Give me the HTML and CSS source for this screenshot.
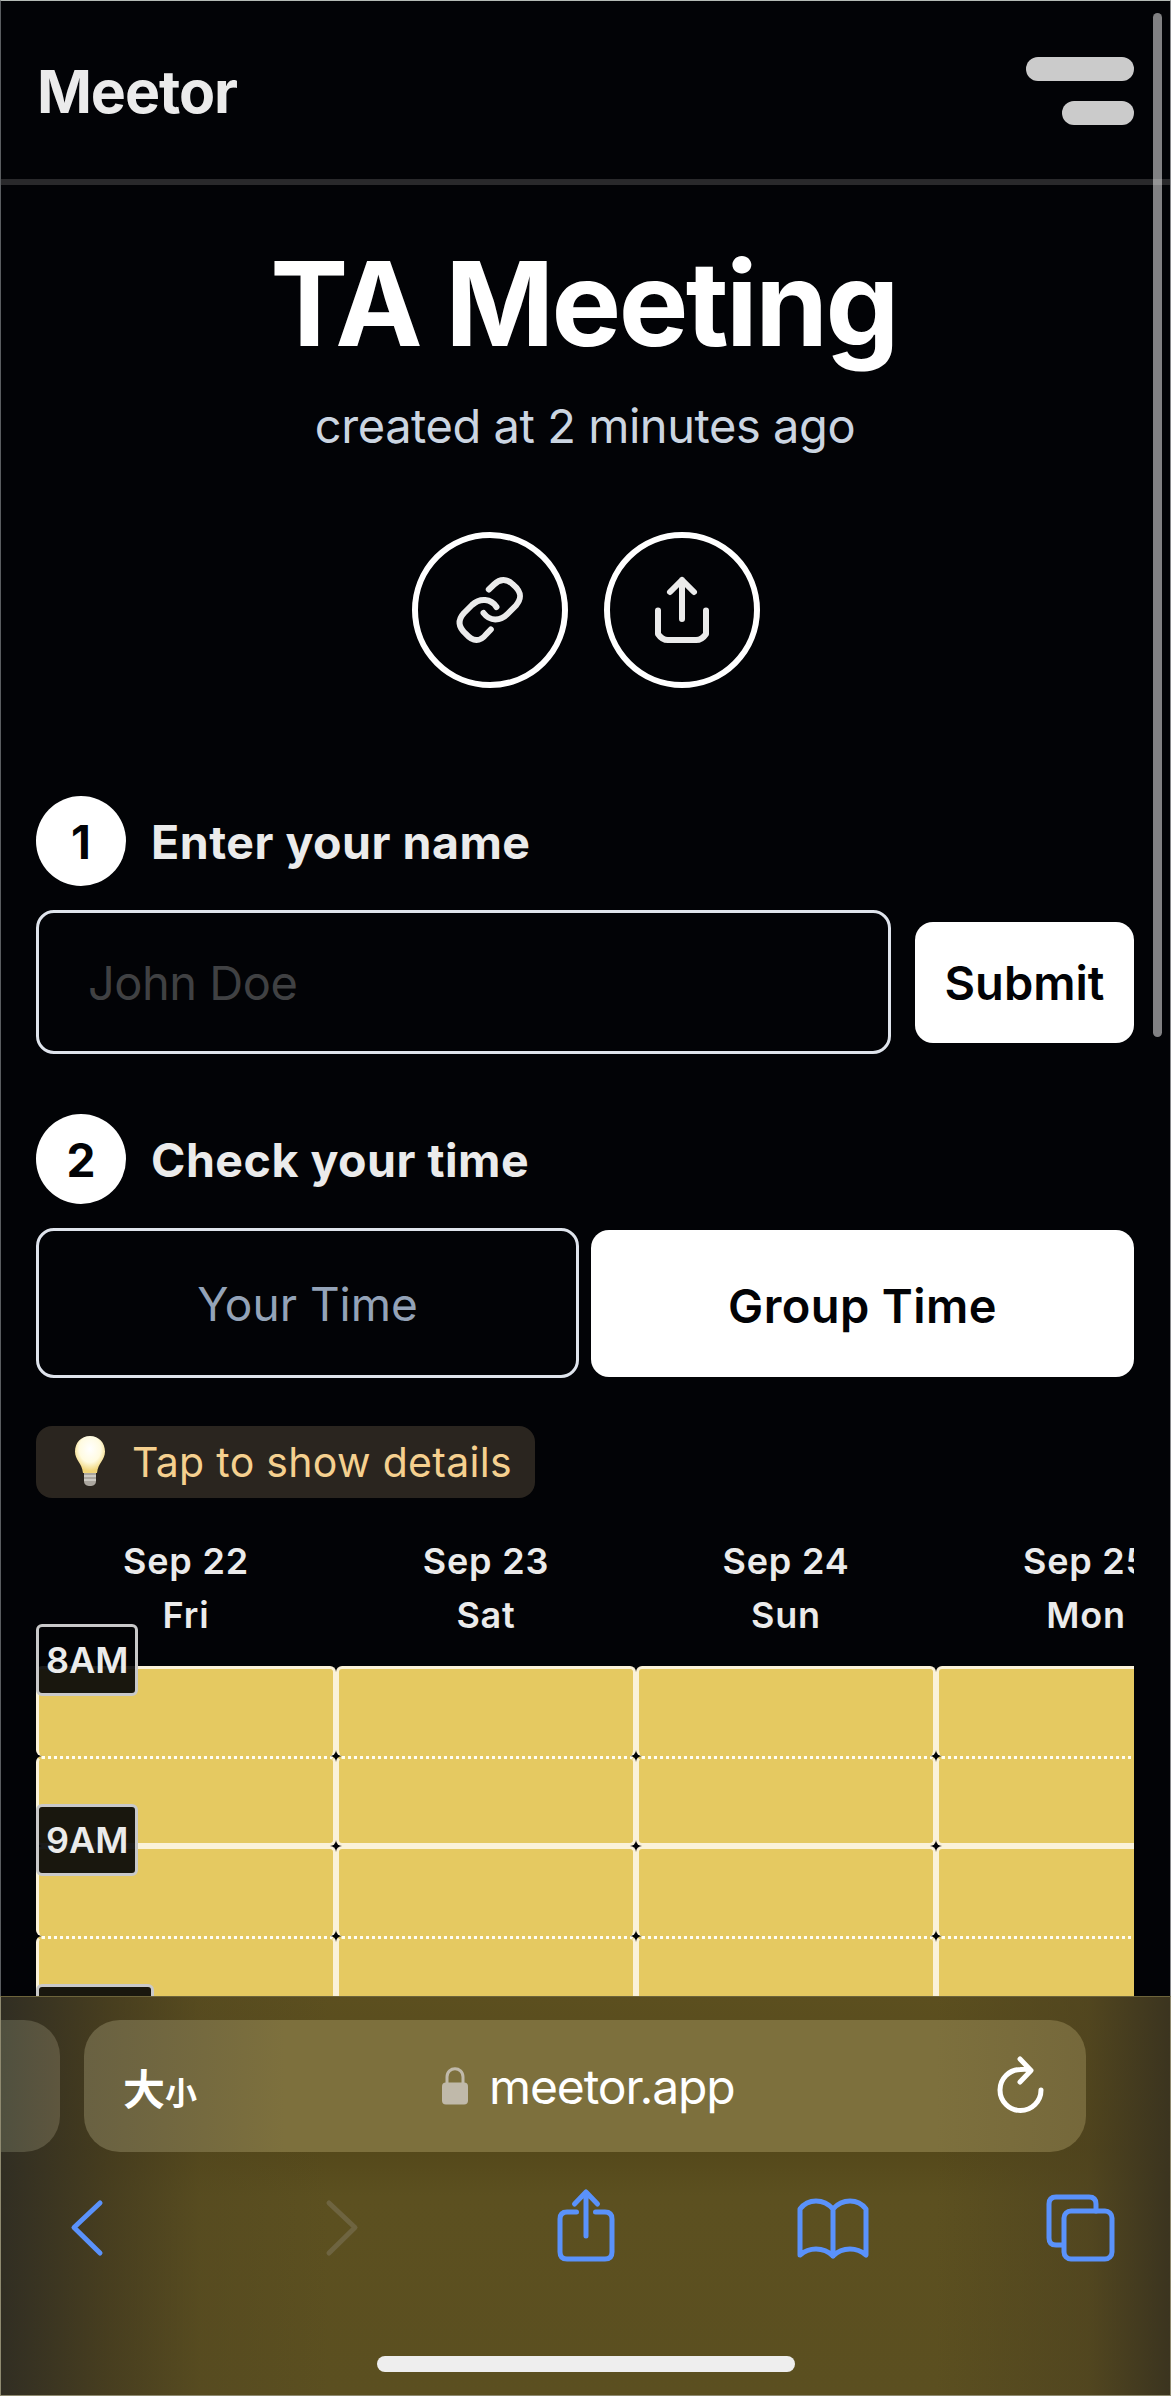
FILE: index.html
```html
<!DOCTYPE html>
<html lang="en">
<head>
	<meta charset="UTF-8">
	<title>Meetor</title>
	<link rel="stylesheet" href="styles.css">
</head>
<body>
	<div class="page">
		<header class="header">
			<div class="logo">Meetor</div>
			<div class="menu">
				<span class="menu-long"></span>
				<span class="menu-short"></span>
			</div>
		</header>
		<h1 class="title">TA Meeting</h1>
		<p class="created">created at 2 minutes ago</p>
		<div class="actions">
			<button class="round">
				<svg width="72" height="72" viewBox="0 0 72 72">
					<path d="M34.800 15.500L40 10.500C46 4.500 53 4.500 59 10.500C68 18 68 24 62 31.500L54 39.500C46 47.500 36 47.500 29.500 39"/>
					<path d="M42.500 33C37 24.500 26 23.500 18 31L10 39C3.500 46 4 53 12 60C19 68 26 68 32 60.500L36.800 55.500"/>
				</svg>
			</button>
			<button class="round">
				<svg width="72" height="72" viewBox="0 0 72 72">
					<path d="M36 45V6M24 18L36 6L48 18M12 36.500V60Q16 66 22 66H50Q56 66 60 60V36.500"/>
				</svg>
			</button>
		</div>

		<div class="step">
			<span class="num">1</span>
			<span class="step-text">Enter your name</span>
		</div>
		<div class="name-row">
			<div class="name-input">John Doe</div>
			<button class="submit">Submit</button>
		</div>

		<div class="step second">
			<span class="num">2</span>
			<span class="step-text">Check your time</span>
		</div>
		<div class="tabs">
			<button class="tab">Your Time</button>
			<button class="tab active">Group Time</button>
		</div>

		<div class="hint">
			<svg width="34" height="54" viewBox="0 0 34 54">
				<defs>
					<radialGradient id="glow" cx=".5" cy=".35" r=".6">
						<stop offset="0" stop-color="#fff"/>
						<stop offset=".6" stop-color="#fffbe0"/>
						<stop offset="1" stop-color="#f0d477"/>
					</radialGradient>
				</defs>
				<path fill="url(#glow)" d="M17 1C8 1 2 8 2 16.500C2 25 9 28 10 38H24C25 28 32 25 32 16.500C32 8 26 1 17 1Z"/>
				<path fill="#aaa69e" d="M11 38H23V46C23 50 20 51 17 51C14 51 11 50 11 46Z"/>
				<path stroke="#d8d5ce" stroke-width="1.500" d="M11 41H23M11 45H23"/>
			</svg>
			<span>Tap to show details</span>
		</div>

		<div class="calendar">
			<div class="col">
				<div class="day">Sep 22<br>Fri</div>
				<div class="cell"><span class="time">8AM</span></div>
				<div class="cell half"></div>
				<div class="cell"><span class="time">9AM</span></div>
				<div class="cell half"></div>
				<div class="cell"><span class="time">10AM</span></div>
			</div>
			<div class="col">
				<div class="day">Sep 23<br>Sat</div>
				<div class="cell"></div>
				<div class="cell half"></div>
				<div class="cell"></div>
				<div class="cell half"></div>
			</div>
			<div class="col">
				<div class="day">Sep 24<br>Sun</div>
				<div class="cell"></div>
				<div class="cell half"></div>
				<div class="cell"></div>
				<div class="cell half"></div>
			</div>
			<div class="col">
				<div class="day">Sep 25<br>Mon</div>
				<div class="cell"></div>
				<div class="cell half"></div>
				<div class="cell"></div>
				<div class="cell half"></div>
			</div>
		</div>
		<div class="scrollbar"></div>
	</div>

	<div class="browser">
		<div class="address-row">
			<div class="prev-tab"></div>
			<div class="address">
				<div class="size"><span class="big">大</span><span class="small">小</span></div>
				<div class="url">
					<svg width="26" height="38" viewBox="0 0 26 38">
						<path d="M5 17V10C5 -1 21 -1 21 10V17" fill="none" stroke="#c0b9aa" stroke-width="3"/>
						<rect y="15.500" width="26" height="22" rx="4" fill="#c0b9aa"/>
					</svg>
					<span>meetor.app</span>
				</div>
				<svg class="reload" width="52" height="60" viewBox="0 0 52 60">
					<path d="M46 34A20.500 20.500 0 1 1 25.500 13.500C29 13 32 13 35 14M25 3L36 14.500L25 26"/>
				</svg>
			</div>
		</div>
		<div class="toolbar">
			<svg width="74" height="80" viewBox="0 0 74 80"><path d="M50 16L24 40.500L50 66"/></svg>
			<svg class="off" width="74" height="80" viewBox="0 0 74 80"><path d="M30 16L56 40.500L30 66"/></svg>
			<svg width="74" height="80" viewBox="0 0 74 80"><path d="M39 49V6M27.500 17L39 5L50.500 17M29.500 25H20Q13 25 13 32V65Q13 72 20 72H58Q65 72 65 65V32Q65 25 58 25H48.500"/></svg>
			<svg width="74" height="80" viewBox="0 0 74 80"><path d="M37 22Q30 14 20 14Q10 14 4 22V68Q11 62 20 62Q30 62 37 69Q44 62 54 62Q63 62 70 68V22Q64 14 54 14Q44 14 37 22ZM37 22V69"/></svg>
			<svg width="74" height="80" viewBox="0 0 74 80"><path d="M19 58H12Q5 58 5 51V17Q5 10 12 10H45Q52 10 52 17V24"/><rect x="20" y="24" width="48" height="48" rx="7"/></svg>
		</div>
		<div class="home"></div>
	</div>
</body>
</html>
```
FILE: styles.css
```css
* {
	box-sizing: border-box;
}
body {
	margin: 0;
	width: 1171px;
	height: 2396px;
	overflow: hidden;
	background-color: #020306;
	font-family: Inter, "Noto Sans CJK SC", sans-serif;
	color: #ebebeb;
}
button {
	font-family: inherit;
	padding: 0;
	border: none;
}
svg {
	display: block;
	flex: none;
}

.page {
	position: relative;
	height: 1996px;
	overflow: hidden;
	border-top: 1px solid #b4bab5;
	border-left: 1px solid #5a5d60;
	border-right: 1px solid #888a8c;
}
.header {
	display: flex;
	justify-content: space-between;
	align-items: center;
	height: 184px;
	padding: 2px 36px 0;
	border-bottom: 6px solid #29292b;
}
.logo {
	font-size: 59px;
	font-weight: 650;
	letter-spacing: -1.1px;
}
.menu {
	display: flex;
	flex-direction: column;
	align-items: flex-end;
	gap: 20px;
}
.menu span {
	height: 24px;
	border-radius: 12px;
	background-color: #cbcbcb;
}
.menu-long {
	width: 108px;
}
.menu-short {
	width: 72px;
}

.title {
	margin: 48px 4px 0 0;
	text-align: center;
	font-size: 117px;
	line-height: 142px;
	font-weight: 700;
	letter-spacing: -2.6px;
	color: #fff;
}
.created {
	margin: 22px 1px 0 0;
	text-align: center;
	font-size: 47px;
	line-height: 58px;
	letter-spacing: -.45px;
	color: #cbd5e1;
}
.actions {
	display: flex;
	justify-content: center;
	gap: 36px;
	margin: 77px 0 0;
}
.round {
	display: flex;
	align-items: center;
	justify-content: center;
	width: 156px;
	height: 156px;
	border: 6px solid #fff;
	border-radius: 50%;
	background: none;
}
.round svg {
	fill: none;
	stroke: #ebebeb;
	stroke-width: 6;
	stroke-linecap: round;
	stroke-linejoin: round;
}

.step {
	display: flex;
	align-items: center;
	gap: 25px;
	margin: 108px 35px 0;
}
.second {
	margin-top: 60px;
}
.num {
	width: 90px;
	height: 90px;
	line-height: 92px;
	border-radius: 50%;
	background-color: #fff;
	color: #020306;
	text-align: center;
	font-size: 46px;
	font-weight: 650;
}
.step-text {
	padding-top: 2px;
	font-size: 46.5px;
	font-weight: 650;
	letter-spacing: .5px;
}
.name-row {
	display: flex;
	align-items: center;
	gap: 24px;
	margin: 24px 36px 0 35px;
}
.name-input {
	flex: 1;
	height: 144px;
	line-height: 140px;
	padding-left: 49px;
	border: 3px solid #dfe4ec;
	border-radius: 18px;
	font-size: 47px;
	letter-spacing: -.5px;
	color: #404143;
}
.submit {
	width: 219px;
	height: 121px;
	border-radius: 18px;
	background-color: #fff;
	color: #020306;
	font-size: 47px;
	font-weight: 600;
}
.tabs {
	display: grid;
	grid-template-columns: 1fr 1fr;
	align-items: center;
	gap: 12px;
	margin: 24px 36px 0 35px;
}
.tab {
	height: 150px;
	padding-top: 2px;
	border: 3px solid #dfe4ec;
	border-radius: 18px;
	background: none;
	color: #94a3b8;
	font-size: 46px;
}
.active {
	height: 147px;
	padding-top: 5px;
	border: none;
	background-color: #fff;
	color: #020306;
	font-size: 47px;
	font-weight: 600;
	letter-spacing: .4px;
}

.hint {
	display: flex;
	align-items: center;
	gap: 25px;
	width: 499px;
	height: 72px;
	margin: 48px 35px 0;
	padding-left: 37px;
	border-radius: 16px;
	background-color: #2a251f;
	color: #f5d08f;
	font-size: 41px;
	letter-spacing: .3px;
	white-space: nowrap;
}

.calendar {
	display: flex;
	margin: 36px 36px 0 35px;
	overflow: hidden;
}
.col {
	flex: none;
	width: 300px;
}
.day {
	height: 132px;
	line-height: 54px;
	text-align: center;
	font-size: 36px;
	font-weight: 600;
	letter-spacing: .8px;
}
.cell {
	position: relative;
	height: 90px;
	border: 3px solid #fbf2d8;
	border-bottom: none;
	border-radius: 6px;
	background-color: #e5c961;
}
.half {
	border-top: 3px dotted #fffdf0;
	border-bottom: 3px solid #fbf2d8;
}
/* hour label sits on the line of its row */
.time {
	position: absolute;
	top: -45px;
	left: -3px;
	z-index: 1;
	height: 72px;
	line-height: 67px;
	padding: 0 7px;
	border: 3px solid #c9c9c9;
	border-radius: 6px;
	background-color: rgba(2, 3, 6, .9);
	font-size: 36px;
	font-weight: 600;
}
.scrollbar {
	position: absolute;
	top: 12px;
	right: 8px;
	width: 9px;
	height: 1024px;
	border-radius: 5px;
	background-color: rgba(255, 255, 255, .5);
}

.browser {
	height: 400px;
	border: 1px solid #8f8a70;
	border-top-color: #6d643b;
	background: linear-gradient(90deg, #312e23, rgba(62, 54, 31, .7) 9%, rgba(80, 69, 32, .4) 17%, rgba(92, 79, 31, 0) 28%, rgba(92, 79, 31, 0) 80%, rgba(75, 64, 31, .6) 93%, #3b341f),
		linear-gradient(#5c4f1f, #54481a 38%, #5c5020 50%, #5b4f20);
}
.address-row {
	display: flex;
	gap: 24px;
	padding-top: 23px;
}
.prev-tab {
	width: 59px;
	height: 132px;
	border-radius: 0 36px 36px 0;
	background: linear-gradient(90deg, #50503f, #5e563e);
}
.address {
	display: flex;
	align-items: center;
	width: 1002px;
	height: 132px;
	padding: 0 39px 0 39px;
	border-radius: 36px;
	background: linear-gradient(90deg, #696142, #7d703d 20%, #7d703d 85%, #75683b);
	color: #fff;
}
.size {
	display: flex;
	align-items: baseline;
	width: 319px;
	font-family: "Noto Sans CJK SC", sans-serif;
	font-weight: 700;
}
.big {
	font-size: 42px;
}
.small {
	font-size: 32px;
}
.url {
	display: flex;
	align-items: center;
	gap: 21px;
	flex: 1;
	font-size: 48px;
	letter-spacing: -1.1px;
}
.reload, .toolbar svg {
	fill: none;
	stroke: #fff;
	stroke-width: 5;
	stroke-linecap: round;
	stroke-linejoin: round;
}
.toolbar {
	display: flex;
	justify-content: space-between;
	padding: 35px 52px 0 49px;
}
.toolbar svg {
	stroke: #5a92fb;
}
.toolbar .off {
	stroke: #6e6440;
}
.home {
	width: 418px;
	height: 16px;
	margin: 89px auto 0;
	border-radius: 8px;
	background-color: #eee;
}
```
